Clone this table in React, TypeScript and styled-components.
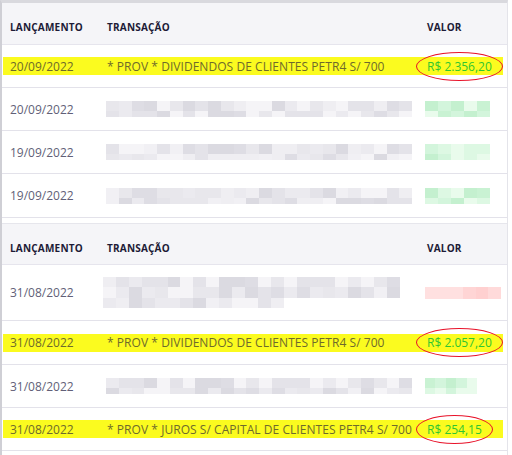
import React from "react";
import styled, { createGlobalStyle } from "styled-components";

const Global = createGlobalStyle`
  html, body { margin: 0; padding: 0; background: #ffffff; }
  body { font-family: "Open Sans", "Liberation Sans", sans-serif; }
`;

const Card = styled.div`
  width: 508px;
  height: 455px;
  overflow: hidden;
  border-left: 2px solid #cfcfd5;
  border-right: 1px solid #e4e4ea;
  border-top: 3px solid #d9d9de;
  box-sizing: border-box;
  background: #fff;
`;

const Section = styled.section<{ $gap?: boolean }>`
  display: flex;
  flex-direction: column;
  margin-top: ${(p) => (p.$gap ? "5px" : "0")};
`;

const HeaderRow = styled.div<{ $top?: boolean }>`
  display: grid;
  grid-template-columns: 97px 320px 1fr;
  align-items: center;
  height: 42px;
  padding: 7px 0 0 8px;
  box-sizing: border-box;
  background: #f5f5f8;
  border-top: ${(p) => (p.$top ? "1px solid #e6e6ec" : "none")};
  border-bottom: 1px solid #e6e5ed;
`;

const HeadCell = styled.div`
  font-size: 10px;
  font-weight: 700;
  color: #1d1b36;
  letter-spacing: 0.2px;
`;

const Row = styled.div<{ $h: number }>`
  display: flex;
  align-items: center;
  height: ${(p) => p.$h}px;
  padding: 0 4px 0 1px;
  border-bottom: 1px solid #e3e2ea;
  box-sizing: border-box;
`;

const Band = styled.div<{ $hl?: boolean }>`
  flex: 1;
  display: grid;
  grid-template-columns: 97px 320px 1fr;
  align-items: center;
  min-height: 18px;
  padding-left: 7px;
  background: ${(p) => (p.$hl ? "#fbfb1f" : "transparent")};
`;

const DateCell = styled.div<{ $hl?: boolean }>`
  font-size: 12px;
  color: ${(p) => (p.$hl ? "#6e6a2c" : "#625f78")};
`;

const TextCell = styled.div`
  font-size: 12px;
  color: #6e6a2c;
  white-space: nowrap;
  letter-spacing: 0.05px;
`;

const ValueCell = styled.div`
  position: relative;
  font-size: 12px;
  color: #30c630;
  white-space: nowrap;
`;

const Ring = styled.span`
  position: absolute;
  left: -11px;
  right: -11px;
  top: -6px;
  bottom: -6px;
  border: 1.4px solid #e8132a;
  border-radius: 50%;
  pointer-events: none;
`;

const Amount = styled.span`
  position: relative;
  display: inline-block;
`;

const Shift = styled.div<{ $dx: number }>`
  margin-left: ${(p) => p.$dx}px;
`;

const Mosaic = styled.div<{ $cols: number; $w: number }>`
  display: grid;
  grid-template-columns: repeat(${(p) => p.$cols}, 1fr);
  width: ${(p) => p.$w}px;
`;

const Block = styled.div<{ $c: string; $h: number }>`
  height: ${(p) => p.$h}px;
  background: ${(p) => p.$c};
`;

const Empty = styled.div<{ $h: number }>`
  height: ${(p) => p.$h}px;
`;

const greys = ["#ebeaef", "#e4e3e9", "#f1f0f4", "#dedde4", "#e8e7ec", "#f5f4f7", "#dbdae1", "#efeef2"];
const greens = ["#d3f5dc", "#c9f2d3", "#ddf8e3", "#c4f0cf", "#e9fbec"];
const reds = ["#ffd0d0", "#ffe0e0", "#ffd5d5", "#ffdada", "#ffe6e6"];

function pick(arr: string[], seed: number) {
  const v = Math.abs(Math.sin(seed * 12.9898) * 43758.5453);
  return arr[Math.floor((v - Math.floor(v)) * arr.length)];
}

function Blur({
  palette,
  cols,
  w,
  heights,
  lens,
  seed,
}: {
  palette: string[];
  cols: number;
  w: number;
  heights: number[];
  lens?: number[];
  seed: number;
}) {
  const cells: React.ReactNode[] = [];
  heights.forEach((h, r) => {
    const len = lens ? lens[r] : cols;
    for (let c = 0; c < cols; c++) {
      const k = `${r}-${c}`;
      if (c < len) cells.push(<Block key={k} $h={h} $c={pick(palette, seed + r * 31 + c * 7)} />);
      else cells.push(<Empty key={k} $h={h} />);
    }
  });
  return (
    <Mosaic $cols={cols} $w={w}>
      {cells}
    </Mosaic>
  );
}

type Item =
  | { kind: "hl"; date: string; text: string; value: string; h: number }
  | { kind: "blur"; date: string; h: number; seed: number; tall?: boolean; red?: boolean; gw?: number };

function Header({ top }: { top?: boolean }) {
  return (
    <HeaderRow $top={top}>
      <HeadCell>LANÇAMENTO</HeadCell>
      <HeadCell>TRANSAÇÃO</HeadCell>
      <HeadCell>VALOR</HeadCell>
    </HeaderRow>
  );
}

function Line({ item }: { item: Item }) {
  if (item.kind === "hl") {
    return (
      <Row $h={item.h}>
        <Band $hl>
          <DateCell $hl>{item.date}</DateCell>
          <TextCell>{item.text}</TextCell>
          <ValueCell>
            <Amount>
              {item.value}
              <Ring />
            </Amount>
          </ValueCell>
        </Band>
      </Row>
    );
  }
  return (
    <Row $h={item.h}>
      <Band>
        <DateCell>{item.date}</DateCell>
        <Shift $dx={item.tall ? -4 : -1}>
          {item.tall ? (
            <Blur palette={greys} cols={23} w={297} heights={[10, 11, 10]} lens={[23, 23, 14]} seed={item.seed} />
          ) : (
            <Blur palette={greys} cols={24} w={306} heights={[10, 6]} seed={item.seed} />
          )}
        </Shift>
        <Shift $dx={-2}>
          {item.red ? (
            <Blur palette={reds} cols={6} w={76} heights={[12]} seed={item.seed + 5} />
          ) : (
            <Blur palette={greens} cols={5} w={item.gw ?? 65} heights={[10, 6]} seed={item.seed + 3} />
          )}
        </Shift>
      </Band>
    </Row>
  );
}

const first: Item[] = [
  { kind: "hl", date: "20/09/2022", text: "* PROV * DIVIDENDOS DE CLIENTES PETR4 S/ 700", value: "R$ 2.356,20", h: 43 },
  { kind: "blur", date: "20/09/2022", h: 43, seed: 3 },
  { kind: "blur", date: "19/09/2022", h: 43, seed: 11 },
  { kind: "blur", date: "19/09/2022", h: 44, seed: 19 },
];

const second: Item[] = [
  { kind: "blur", date: "31/08/2022", h: 56, seed: 27, tall: true, red: true },
  { kind: "hl", date: "31/08/2022", text: "* PROV * DIVIDENDOS DE CLIENTES PETR4 S/ 700", value: "R$ 2.057,20", h: 44 },
  { kind: "blur", date: "31/08/2022", h: 43, seed: 41, gw: 52 },
  { kind: "hl", date: "31/08/2022", text: "* PROV * JUROS S/ CAPITAL DE CLIENTES PETR4 S/ 700", value: "R$ 254,15", h: 43 },
];

export default function App() {
  return (
    <>
      <Global />
      <Card>
        <Section>
          <Header />
          {first.map((it, i) => (
            <Line key={i} item={it} />
          ))}
        </Section>
        <Section $gap>
          <Header top />
          {second.map((it, i) => (
            <Line key={i} item={it} />
          ))}
        </Section>
      </Card>
    </>
  );
}
